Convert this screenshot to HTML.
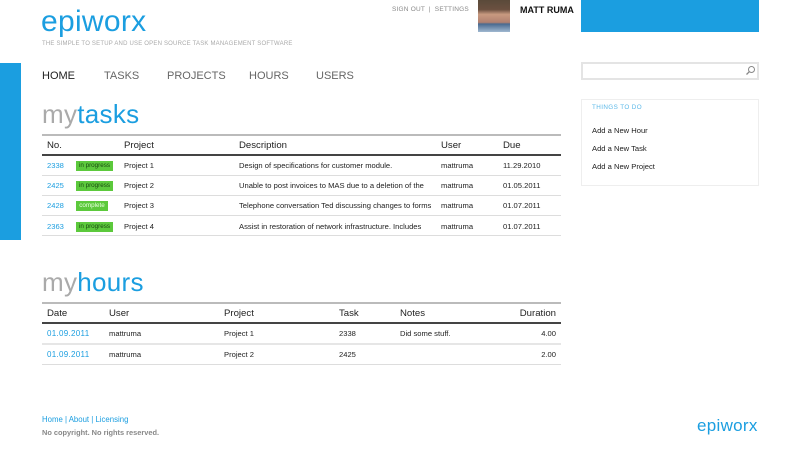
<!DOCTYPE html>
<html><head><style>
*{margin:0;padding:0;box-sizing:border-box}
body{width:800px;height:450px;position:relative;background:#fff;font-family:"Liberation Sans",sans-serif;color:#222;overflow:hidden}
.a{position:absolute;white-space:nowrap}
.blue{color:#1b9ee0}
.line{position:absolute;left:42px;width:519px}
.t{font-size:7.6px}
.h{font-size:9.6px;color:#222}
.b{position:absolute;left:76px;width:37px;height:10px;background:#5cc93c;color:#1a4a10;font-size:6.3px;line-height:10px;text-align:center}
</style></head><body>
<div class="a blue" style="left:41px;top:5px;font-size:30px;letter-spacing:0.3px">epiworx</div>
<div class="a" style="left:42px;top:41px;font-size:6px;color:#aaa;letter-spacing:0.2px">THE SIMPLE TO SETUP AND USE OPEN SOURCE TASK MANAGEMENT SOFTWARE</div>
<div class="a" style="left:392px;top:6px;font-size:6.5px;color:#888;letter-spacing:0.2px">SIGN OUT &nbsp;|&nbsp; SETTINGS</div>
<div class="a" style="left:478px;top:0;width:32px;height:32px;background:linear-gradient(#5a4a3a 0,#6b5040 30%,#c89a80 45%,#b08070 70%,#4a6a90 75%,#a0b8d0 100%)"></div>
<div class="a" style="left:520px;top:5px;font-size:9px;font-weight:bold;color:#111">MATT RUMA</div>
<div class="a" style="left:581px;top:0;width:178px;height:32px;background:#1b9ee0"></div>
<div class="a" style="left:0;top:63px;width:21px;height:177px;background:#1b9ee0"></div>
<div class="a" style="left:42px;top:70px;font-size:11px;color:#222">HOME</div>
<div class="a" style="left:104px;top:70px;font-size:11px;color:#666">TASKS</div>
<div class="a" style="left:167px;top:70px;font-size:11px;color:#666">PROJECTS</div>
<div class="a" style="left:249px;top:70px;font-size:11px;color:#666">HOURS</div>
<div class="a" style="left:316px;top:70px;font-size:11px;color:#666">USERS</div>

<div class="a" style="left:42px;top:99px;font-size:26px;letter-spacing:0.3px"><span style="color:#aaa">my</span><span class="blue">tasks</span></div>
<div class="line" style="top:134px;height:2px;background:#bbb"></div>
<div class="a h" style="left:47px;top:140px">No.</div>
<div class="a h" style="left:124px;top:140px">Project</div>
<div class="a h" style="left:239px;top:140px">Description</div>
<div class="a h" style="left:441px;top:140px">User</div>
<div class="a h" style="left:503px;top:140px">Due</div>
<div class="line" style="top:154px;height:2px;background:#444"></div>

<div class="a t blue" style="left:47px;top:161px">2338</div><div class="b" style="top:161px">in progress</div>
<div class="a t" style="left:124px;top:161px">Project 1</div><div class="a t" style="left:239px;top:161px">Design of specifications for customer module.</div><div class="a t" style="left:441px;top:161px">mattruma</div><div class="a t" style="left:503px;top:161px">11.29.2010</div>
<div class="line" style="top:175px;height:1px;background:#ddd"></div>
<div class="a t blue" style="left:47px;top:181px">2425</div><div class="b" style="top:181px">in progress</div>
<div class="a t" style="left:124px;top:181px">Project 2</div><div class="a t" style="left:239px;top:181px">Unable to post invoices to MAS due to a deletion of the</div><div class="a t" style="left:441px;top:181px">mattruma</div><div class="a t" style="left:503px;top:181px">01.05.2011</div>
<div class="line" style="top:195px;height:1px;background:#ddd"></div>
<div class="a t blue" style="left:47px;top:201px">2428</div><div class="b" style="top:201px;width:32px;color:#e8ffe0">complete</div>
<div class="a t" style="left:124px;top:201px">Project 3</div><div class="a t" style="left:239px;top:201px">Telephone conversation Ted discussing changes to forms</div><div class="a t" style="left:441px;top:201px">mattruma</div><div class="a t" style="left:503px;top:201px">01.07.2011</div>
<div class="line" style="top:215px;height:1px;background:#ddd"></div>
<div class="a t blue" style="left:47px;top:222px">2363</div><div class="b" style="top:222px">in progress</div>
<div class="a t" style="left:124px;top:222px">Project 4</div><div class="a t" style="left:239px;top:222px">Assist in restoration of network infrastructure. Includes</div><div class="a t" style="left:441px;top:222px">mattruma</div><div class="a t" style="left:503px;top:222px">01.07.2011</div>
<div class="line" style="top:235px;height:1px;background:#ddd"></div>

<div class="a" style="left:42px;top:267px;font-size:26px;letter-spacing:0.3px"><span style="color:#aaa">my</span><span class="blue">hours</span></div>
<div class="line" style="top:302px;height:2px;background:#bbb"></div>
<div class="a h" style="left:47px;top:308px">Date</div>
<div class="a h" style="left:109px;top:308px">User</div>
<div class="a h" style="left:224px;top:308px">Project</div>
<div class="a h" style="left:339px;top:308px">Task</div>
<div class="a h" style="left:400px;top:308px">Notes</div>
<div class="a h" style="left:500px;top:308px;width:56px;text-align:right">Duration</div>
<div class="line" style="top:322px;height:2px;background:#444"></div>
<div class="a t blue" style="left:47px;top:329px;font-size:8px;letter-spacing:0.3px">01.09.2011</div><div class="a t" style="left:109px;top:329px">mattruma</div><div class="a t" style="left:224px;top:329px">Project 1</div><div class="a t" style="left:339px;top:329px">2338</div><div class="a t" style="left:400px;top:329px">Did some stuff.</div><div class="a t" style="left:500px;top:329px;width:56px;text-align:right">4.00</div>
<div class="line" style="top:343px;height:2px;background:#e6e6e6"></div>
<div class="a t blue" style="left:47px;top:350px;font-size:8px;letter-spacing:0.3px">01.09.2011</div><div class="a t" style="left:109px;top:350px">mattruma</div><div class="a t" style="left:224px;top:350px">Project 2</div><div class="a t" style="left:339px;top:350px">2425</div><div class="a t" style="left:500px;top:350px;width:56px;text-align:right">2.00</div>
<div class="line" style="top:364px;height:1px;background:#ddd"></div>

<div class="a" style="left:581px;top:62px;width:178px;height:18px;border:2px solid #e4e4e4"></div>
<svg class="a" style="left:745px;top:65px" width="11" height="11" viewBox="0 0 11 11"><circle cx="6.5" cy="4.5" r="3" fill="none" stroke="#888" stroke-width="1"/><line x1="4.3" y1="6.7" x2="1.5" y2="9.5" stroke="#888" stroke-width="1.3"/></svg>
<div class="a" style="left:581px;top:99px;width:178px;height:87px;border:1px solid #eee"></div>
<div class="a" style="left:592px;top:104px;font-size:6.3px;color:#5bb8e8;letter-spacing:0.4px">THINGS TO DO</div>
<div class="a t" style="left:592px;top:126px">Add a New Hour</div>
<div class="a t" style="left:592px;top:144px">Add a New Task</div>
<div class="a t" style="left:592px;top:162px">Add a New Project</div>

<div class="a blue" style="left:42px;top:415px;font-size:7.8px">Home | About | Licensing</div>
<div class="a" style="left:42px;top:428px;font-size:7.4px;font-weight:bold;color:#888">No copyright. No rights reserved.</div>
<div class="a blue" style="left:697px;top:416px;font-size:17px;letter-spacing:0.3px">epiworx</div>
</body></html>
